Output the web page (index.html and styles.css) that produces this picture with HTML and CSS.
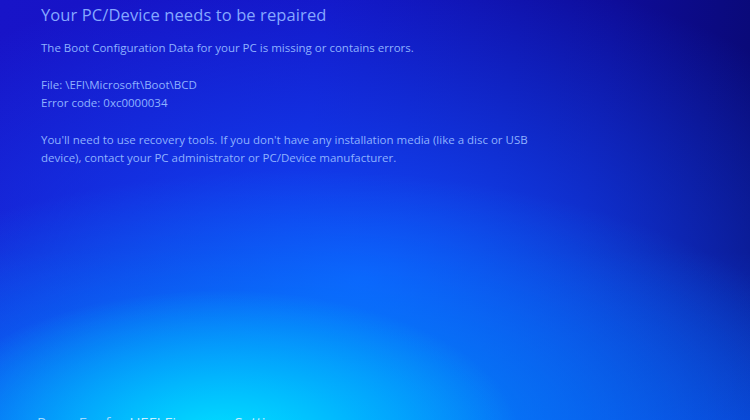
FILE: index.html
```html
<!DOCTYPE html>
<html>
<head>
<meta charset="utf-8">
<link rel="stylesheet" href="styles.css">
</head>
<body>
<div class="screen">
  <div class="content">
    <h1 class="title">Your PC/Device needs to be repaired</h1>
    <p class="line">The Boot Configuration Data for your PC is missing or contains errors.</p>
    <p class="block">File: \EFI\Microsoft\Boot\BCD<br>Error code: 0xc0000034</p>
    <p class="block">You'll need to use recovery tools. If you don't have any installation media (like a disc or USB<br>device), contact your PC administrator or PC/Device manufacturer.</p>
  </div>
  <div class="footer">Press Esc for <span class="hl">UEFI Firmware Settings</span></div>
</div>
</body>
</html>
```
FILE: styles.css
```css
html, body {
  margin: 0;
  padding: 0;
  width: 750px;
  height: 420px;
  overflow: hidden;
}
.screen {
  width: 750px;
  height: 420px;
  overflow: hidden;
  display: flex;
  flex-direction: column;
  justify-content: space-between;
  font-family: "Open Sans", "Noto Sans", sans-serif;
  color: #8fb2ff;
  background:
    radial-gradient(ellipse 300px 150px at 220px 440px, rgba(0, 225, 255, 1), rgba(0, 205, 255, 0.6) 50%, rgba(0, 170, 255, 0) 100%),
    radial-gradient(ellipse 560px 260px at 300px 430px, rgba(0, 150, 255, 0.9), rgba(0, 120, 255, 0) 100%),
    radial-gradient(ellipse 560px 320px at 360px 280px, rgba(16, 80, 255, 0.95), rgba(16, 60, 255, 0) 100%),
    linear-gradient(180deg, rgba(0,0,0,0) 60%, rgba(10, 80, 255, 0.6) 100%),
    linear-gradient(100deg, #1814c8 0%, #1412c4 40%, #0e0c98 75%, #08086a 100%);
}
.content {
  padding: 3px 0 0 41px;
}
.title {
  margin: 0;
  font-weight: 400;
  font-size: 16.5px;
  line-height: 24px;
  letter-spacing: 0.1px;
  color: #86a8ff;
}
.line {
  margin: 12px 0 0 0;
  font-size: 11.5px;
  line-height: 18px;
}
.block {
  margin: 19px 0 0 0;
  font-size: 11.5px;
  line-height: 18px;
}
.footer {
  padding-left: 37px;
  font-size: 15px;
  line-height: 20px;
  margin-bottom: -12px;
  color: #9fd8ff;
}
.hl {
  color: #c8f0ff;
}
```
